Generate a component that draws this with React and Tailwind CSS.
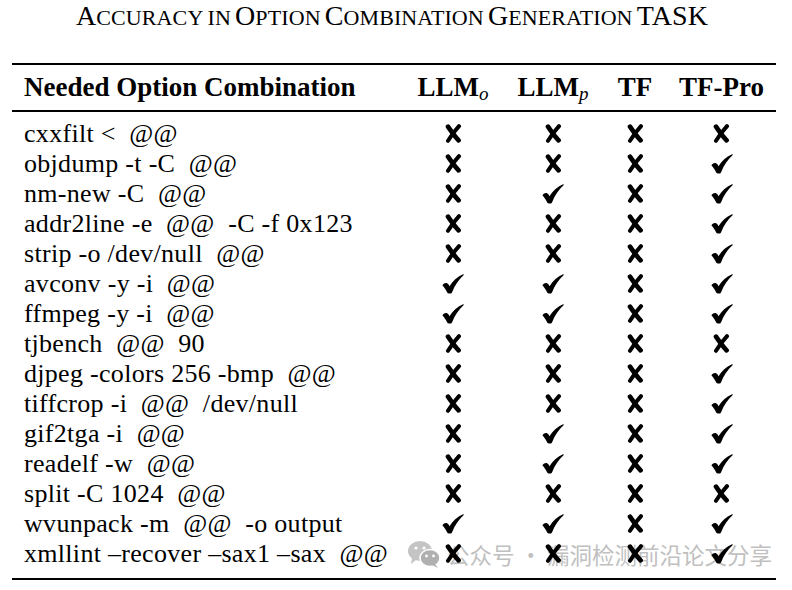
import React from "react";

const X = "x";
const C = "c";

const rows = [
  ["cxxfilt < \u00a0@@", X, X, X, X],
  ["objdump -t -C \u00a0@@", X, X, X, C],
  ["nm-new -C \u00a0@@", X, C, X, C],
  ["addr2line -e \u00a0@@ \u00a0-C -f 0x123", X, X, X, C],
  ["strip -o /dev/null \u00a0@@", X, X, X, C],
  ["avconv -y -i \u00a0@@", C, C, X, C],
  ["ffmpeg -y -i \u00a0@@", C, C, X, C],
  ["tjbench \u00a0@@ \u00a090", X, X, X, X],
  ["djpeg -colors 256 -bmp \u00a0@@", X, X, X, C],
  ["tiffcrop -i \u00a0@@ \u00a0/dev/null", X, X, X, C],
  ["gif2tga -i \u00a0@@", X, C, X, C],
  ["readelf -w \u00a0@@", X, C, X, C],
  ["split -C 1024 \u00a0@@", X, X, X, X],
  ["wvunpack -m \u00a0@@ \u00a0-o output", C, C, X, C],
  ["xmllint –recover –sax1 –sax \u00a0@@", X, X, X, C],
];

function SC({ w }) {
  return (
    <span>
      <span className="text-[28px]">{w[0]}</span>
      <span className="text-[22px]">{w.slice(1)}</span>
    </span>
  );
}

function Mark({ m }) {
  if (m === "x") {
    return (
      <svg width="17" height="19" viewBox="0 0 17 19" className="inline-block">
        <path d="M3 2.6 C6 7 9.5 12 13.6 16.4" stroke="#000" strokeWidth="4.6" strokeLinecap="round" fill="none" />
        <path d="M14 2.2 C10 6.6 6.4 11.4 3 16.8" stroke="#000" strokeWidth="4" strokeLinecap="round" fill="none" />
      </svg>
    );
  }
  return (
    <svg width="22" height="20" viewBox="0 0 22 20" className="inline-block">
      <path
        d="M0.4 11.2 C2.4 8.4 5.2 8.4 6.6 10.6 L7.5 12.2 C10.8 7 15 2.8 21 0.3 C21.7 0.2 22 0.8 21.5 1.2 C16.8 5.4 12.8 11 10 18.4 C9.3 19.9 6 20 5.2 18.6 C3.9 15.8 2.4 13.3 0.4 11.2 Z"
        fill="#000"
      />
    </svg>
  );
}

function WeChat() {
  return (
    <svg width="34" height="30" viewBox="0 0 34 30">
      <ellipse cx="13" cy="12" rx="12" ry="10" fill="#c4c4c4" />
      <path d="M5 19 L4 25 L10 20 Z" fill="#c4c4c4" />
      <circle cx="9" cy="9" r="1.6" fill="#fff" />
      <circle cx="17" cy="9" r="1.6" fill="#fff" />
      <ellipse cx="23" cy="19" rx="10" ry="8.5" fill="#b0b0b0" stroke="#fff" strokeWidth="1.5" />
      <path d="M28 25 L31 29 L25 26 Z" fill="#b0b0b0" />
      <circle cx="19.5" cy="17" r="1.4" fill="#fff" />
      <circle cx="26.5" cy="17" r="1.4" fill="#fff" />
    </svg>
  );
}

export default function App() {
  return (
    <div className="relative w-[792px] h-[590px] bg-white text-black font-['Liberation_Serif',serif] overflow-hidden">
      <div className="h-[32px] leading-[32px] text-center whitespace-nowrap pr-[8px] tracking-[0.1px]">
        <SC w="ACCURACY" /> <span className="text-[22px]">IN</span> <SC w="OPTION" />{" "}
        <SC w="COMBINATION" /> <SC w="GENERATION" /> <span className="text-[28px]">TASK</span>
      </div>

      <div className="absolute left-[407px] top-[539px] flex items-center gap-[6px] z-0">
        <WeChat />
        <span className="font-['Noto_Sans_CJK_SC',sans-serif] text-[22.5px] text-[#c0c0c0] leading-[30px] whitespace-nowrap">
          公众号 · 漏洞检测前沿论文分享
        </span>
      </div>

      <div className="relative z-10 mt-[31px] ml-[12px] w-[764px]">
        <div className="h-[2px] bg-black" />
        <div className="grid grid-cols-[391px_100px_100px_64px_109px] h-[45px] items-center whitespace-nowrap font-bold text-[27px]">
          <div className="pl-[12px]">Needed Option Combination</div>
          <div className="text-center">
            LLM<sub className="font-normal italic text-[19px] bottom-[-4px]">o</sub>
          </div>
          <div className="text-center">
            LLM<sub className="font-normal italic text-[19px] bottom-[-4px]">p</sub>
          </div>
          <div className="text-center">TF</div>
          <div className="text-center">TF-Pro</div>
        </div>
        <div className="h-[1.5px] bg-black" />
        <div className="pt-[7px] pb-[9px]">
          {rows.map((r, i) => (
            <div
              key={i}
              className="grid grid-cols-[391px_100px_100px_64px_109px] h-[30px] items-center whitespace-nowrap"
            >
              <div className="pl-[12px] leading-[30px] text-[26px] tracking-[0.3px]">{r[0]}</div>
              <div className="flex justify-center"><Mark m={r[1]} /></div>
              <div className="flex justify-center"><Mark m={r[2]} /></div>
              <div className="flex justify-center"><Mark m={r[3]} /></div>
              <div className="flex justify-center"><Mark m={r[4]} /></div>
            </div>
          ))}
        </div>
        <div className="h-[2px] bg-black" />
      </div>
    </div>
  );
}
